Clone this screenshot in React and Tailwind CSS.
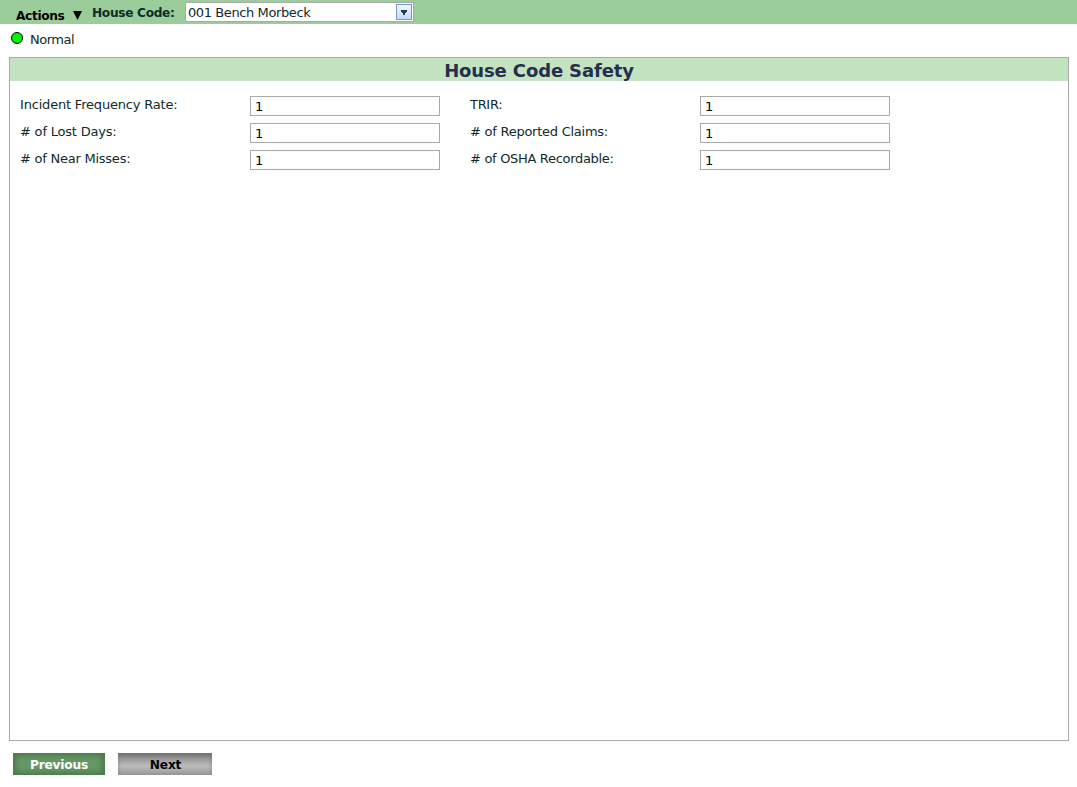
import React from "react";

const rows = [
  [
    { label: "Incident Frequency Rate:", tracking: "tracking-[-0.19px]" },
    { label: "TRIR:", tracking: "tracking-[-0.3px]" },
  ],
  [
    { label: "# of Lost Days:", tracking: "tracking-[-0.2px]" },
    { label: "# of Reported Claims:", tracking: "tracking-[-0.25px]" },
  ],
  [
    { label: "# of Near Misses:", tracking: "tracking-[-0.24px]" },
    { label: "# of OSHA Recordable:", tracking: "tracking-[-0.31px]" },
  ],
];

function Field({ label, tracking }) {
  return (
    <div className="flex w-[450px]">
      <label className={`w-[230px] leading-[17px] whitespace-nowrap ${tracking}`}>{label}</label>
      <input
        defaultValue="1"
        aria-label={label}
        className="h-5 w-[190px] border border-[#a9a9a9] bg-white pl-1 text-black outline-none"
      />
    </div>
  );
}

export default function App() {
  return (
    <div className="flex h-[787px] w-[1077px] flex-col bg-white font-['DejaVu_Sans',sans-serif] text-[13px] text-[#0f2b2b]">
      <header className="flex h-6 shrink-0 items-start bg-[#9acd99]">
        <button className="flex h-6 w-[82px] items-start pt-[7px] pl-4 text-[12.2px] leading-4 font-bold tracking-[-0.35px] text-black">
          <span className="w-[57px] pt-px text-left">Actions</span>
          <svg className="mt-1 h-[9px] w-[9px]" viewBox="0 0 9 9">
            <path d="M0 0H9L4.5 9Z" fill="#000" />
          </svg>
        </button>
        <span className="w-[93px] shrink-0 pt-[5px] pl-[10px] text-[12.2px] leading-[17px] font-bold tracking-[-0.33px] whitespace-nowrap">
          House Code:
        </span>
        <div className="mt-[2px] ml-[10px] flex h-5 w-[229px] items-center justify-between border border-[#a9a9a9] bg-white pr-px pl-[2px]">
          <span className="pt-[2px] leading-4 tracking-[-0.4px]">001 Bench Morbeck</span>
          <span className="flex h-4 w-4 items-center justify-center border border-[#7597c8] bg-linear-to-b from-[#f4f9ff] to-[#c3d8fa]">
            <svg className="h-[5px] w-[6px]" viewBox="0 0 6 5" shapeRendering="crispEdges">
              <path d="M0 0H6V2H5V3H4V5H2V3H1V2H0Z" fill="#263b55" />
            </svg>
          </span>
        </div>
      </header>
      <div className="flex h-[33px] shrink-0 items-start pl-[11px]">
        <span className="mt-2 h-3 w-3 rounded-full border border-black bg-[#00f500]" />
        <span className="mt-[7px] ml-[7px] leading-[17px] tracking-[-0.5px]">Normal</span>
      </div>
      <main className="mr-2 ml-[9px] h-[684px] shrink-0 border border-[#a9a9a9]">
        <h1 className="h-[23px] bg-[#c4e4c1] text-center text-[18px] leading-[25px] font-bold tracking-[-0.13px] text-[#262e4e]">
          House Code Safety
        </h1>
        <div className="flex flex-col gap-[7px] pt-[15px] pl-[10px]">
          {rows.map(([left, right]) => (
            <div key={left.label} className="flex">
              <Field {...left} />
              <Field {...right} />
            </div>
          ))}
        </div>
      </main>
      <footer className="flex gap-[13px] pt-3 pl-[13px] text-[12.2px] leading-[22px] font-bold tracking-[-0.22px]">
        <button className="h-[22px] w-[92px] bg-[#669966] pt-px text-white shadow-[inset_0_0_7px_2px_#477047]">
          Previous
        </button>
        <button className="h-[22px] w-[94px] bg-linear-to-b from-[#808080] via-[#bcbcbc] via-60% to-[#969696] pt-px pl-px text-black shadow-[inset_0_3px_5px_-1px_#6f6f6f]">
          Next
        </button>
      </footer>
    </div>
  );
}
